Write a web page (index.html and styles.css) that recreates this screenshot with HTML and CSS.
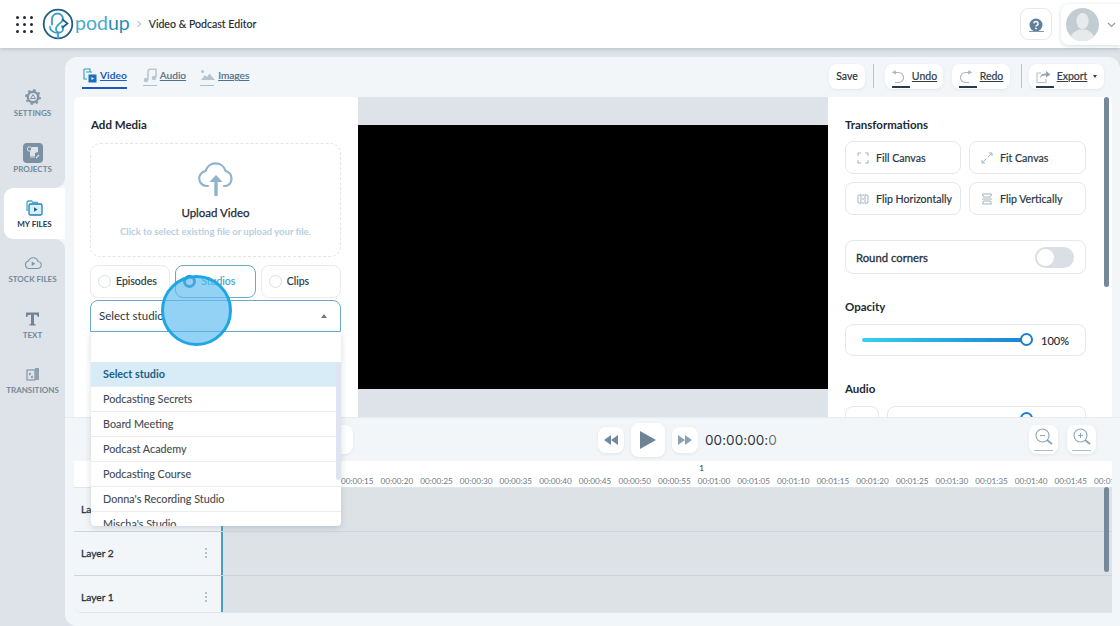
FILE: index.html
```html
<!DOCTYPE html>
<html lang="en">
<head>
<meta charset="utf-8">
<title>Video &amp; Podcast Editor</title>
<link rel="stylesheet" href="styles.css">
</head>
<body>
<div class="app">
  <header class="topbar">
    <div class="grid-icon"><i></i><i></i><i></i><i></i><i></i><i></i><i></i><i></i><i></i></div>
    <svg class="logo-mark" width="32" height="32" viewBox="0 0 32 32" fill="none" stroke-linecap="round">
      <circle cx="16" cy="16" r="14.300" stroke="#1f5f86" stroke-width="1.800"/>
      <path d="M10 16.500V11a5.500 5.500 0 0 1 11 0c0 4-7 5-7 10a3.500 3.500 0 0 0 7 0c0-1-.5-2-1-3" stroke="#3a9fc6" stroke-width="1.800"/>
      <path d="M8 19c0 3 3 6 8 6M16 25v5" stroke="#3a9fc6" stroke-width="1.800"/>
      <path d="M20.500 11.500l5 4-5 4" stroke="#1f5f86" stroke-width="1.700"/>
    </svg>
    <span class="logo-text">pod<b>up</b></span>
    <svg class="crumb-sep" width="6" height="8" viewBox="0 0 6 8" fill="none"><path d="M1.500 1l3 3-3 3" stroke="#9aa5ad"/></svg>
    <span class="crumb">Video &amp; Podcast Editor</span>
    <span class="spacer"></span>
    <button class="help-btn">
      <svg width="16" height="16" viewBox="0 0 16 16"><circle cx="8" cy="7" r="6.500" fill="#5f7f9b"/><path d="M5.900 5.400a2.100 2.100 0 1 1 3 2c-.6.3-.9.6-.9 1.200" fill="none" stroke="#fff" stroke-width="1.500"/><circle cx="8" cy="10.400" r=".9" fill="#fff"/></svg>
      <span class="bar bar-help"></span>
    </button>
    <div class="user-card">
      <svg class="avatar" width="33" height="33" viewBox="0 0 33 33"><circle cx="16.500" cy="16.500" r="16.500" fill="#c2ccd1"/><ellipse cx="16.500" cy="13" rx="6.200" ry="8" fill="#e6eaec"/><path d="M5 29c1-5 6-6 8-7.500h7c2 1.500 7 2.500 8 7.500a16.500 16.500 0 0 1-23 0z" fill="#e6eaec"/></svg>
      <svg width="9" height="6" viewBox="0 0 9 6" fill="none"><path d="M1 1l3.500 3.500L8 1" stroke="#8b9aa6" stroke-width="1.200"/></svg>
    </div>
  </header>

  <div class="body-row">
    <nav class="sidebar">
      <div class="nav-group nav-top">
        <a class="nav-item"><svg width="16" height="16" viewBox="0 0 16 16" fill="none"><circle cx="8" cy="8" r="5.200" stroke="#8396a6" stroke-width="2.400"/><circle cx="8" cy="8" r="7" stroke="#8396a6" stroke-width="1.800" stroke-dasharray="2.500 3"/><path d="M8 5.500l2.300 4H5.700z" stroke="#8396a6"/></svg><span>SETTINGS</span></a>
        <a class="nav-item"><svg width="20" height="20" viewBox="0 0 20 20"><rect width="20" height="20" rx="4" fill="#7b91a3"/><circle cx="6.500" cy="6" r="2.200" fill="none" stroke="#dde3e8"/><path d="M9 4h6v5l-3 1v3H7v-4" fill="#dde3e8"/><path d="M7 14h5M13 15l3-3" stroke="#dde3e8" stroke-width="1.200"/></svg><span>PROJECTS</span></a>
      </div>
      <div class="nav-active-wrap">
        <a class="nav-item active"><svg width="17" height="16" viewBox="0 0 17 16" fill="none"><path d="M1 11V2.500C1 1.700 1.500 1 2.500 1h3l1.500 1.500h5" stroke="#3fa9d0" stroke-width="1.300"/><rect x="3" y="4" width="13" height="11" rx="1.500" fill="#d8eef8" stroke="#1f7fb5" stroke-width="1.300"/><path d="M8 7.200l3.500 2.300L8 11.800z" fill="#1f5f8f"/></svg><span>MY FILES</span></a>
      </div>
      <div class="nav-group nav-bottom">
        <a class="nav-item"><svg width="18" height="13" viewBox="0 0 18 13" fill="none"><path d="M5 12a3.800 3.800 0 0 1-.5-7.500A5 5 0 0 1 14 5a3.500 3.500 0 0 1-.5 7z" stroke="#7f92a2" stroke-width="1.100"/><path d="M7.700 5l3.500 2.200-3.500 2.200z" fill="#7f92a2"/></svg><span>STOCK FILES</span></a>
        <a class="nav-item"><svg width="15" height="15" viewBox="0 0 15 15"><path d="M1 1h13v4.500h-1.300c-.2-1.600-.8-2.300-2.400-2.300H9v8.500c0 .8.300 1 1.600 1V14H4.400v-1.300c1.300 0 1.600-.2 1.600-1V3.200H4.700c-1.600 0-2.200.7-2.400 2.300H1z" fill="#6f8597"/></svg><span>TEXT</span></a>
        <a class="nav-item"><svg width="14" height="14" viewBox="0 0 14 14" fill="none"><rect x="1" y="3" width="8" height="10" stroke="#7f92a2" stroke-width="1.100"/><path d="M9 1h4v12H9z" fill="#8fa0ae"/><path d="M3 6l2 1-2 1M7 9l-2 1 2 1" stroke="#7f92a2"/></svg><span>TRANSITIONS</span></a>
      </div>
    </nav>

    <main class="workspace">
      <div class="toolbar">
        <a class="tab tab-on">
          <svg width="14" height="15" viewBox="0 0 14 15" fill="none"><path d="M1 1h6v3M1 1v10h3M3 4h6" stroke="#2f9cc4" stroke-width="1.100"/><rect x="5.500" y="6.500" width="8" height="8" fill="#1a6fc2"/><path d="M8.500 9l2.500 1.500L8.500 12z" fill="#fff"/></svg>
          <span>Video</span>
        </a>
        <a class="tab">
          <svg width="14" height="15" viewBox="0 0 14 15" fill="none"><path d="M5 12V3.500C5 2 6 1.200 7.500 1.200H13v8" stroke="#b9c7d1" stroke-width="1.600"/><circle cx="3" cy="12" r="2.300" fill="#b9c7d1"/><circle cx="11" cy="10" r="2.300" fill="#b9c7d1"/></svg>
          <span>Audio</span>
          <i class="tab-bar"></i>
        </a>
        <a class="tab tab-images">
          <svg width="15" height="12" viewBox="0 0 15 12"><circle cx="2.500" cy="2.500" r="1.500" fill="#b4c5d0"/><path d="M1 11l4-5 2 2 2.500-3.500L15 11z" fill="#b4c5d0"/></svg>
          <span>Images</span>
          <i class="tab-bar"></i>
        </a>
        <span class="spacer"></span>
        <button class="tool-btn btn-save">Save</button>
        <span class="tool-sep"></span>
        <button class="tool-btn btn-undo">
          <svg width="14" height="13" viewBox="0 0 14 13" fill="none"><path d="M3 2.500h4.500a5 5 0 0 1 0 10H4" stroke="#a9b7c2" stroke-width="1.100"/><path d="M4.500 0L1 2.500 5 4.500z" fill="#a9b7c2"/></svg>
          <u>Undo</u><i class="bar bar-tool"></i>
        </button>
        <button class="tool-btn btn-redo">
          <svg width="14" height="13" viewBox="0 0 14 13" fill="none"><path d="M11 2.500H6.500a5 5 0 0 0 0 10H10" stroke="#a9b7c2" stroke-width="1.100"/><path d="M9.500 0L13 2.500 9 4.500z" fill="#a9b7c2"/></svg>
          <u>Redo</u><i class="bar bar-tool"></i>
        </button>
        <span class="tool-sep sep-wide"></span>
        <button class="tool-btn btn-export">
          <svg width="15" height="13" viewBox="0 0 15 13" fill="none"><path d="M5 3H1v9.500h9V9" stroke="#b5c3cd" stroke-width="1.100"/><path d="M4 8c0-3 2-4.500 6-4.500V1l4.500 3.500L10 7.500V5.500C7 5.500 5 6 4 8z" fill="#8ea5b7"/></svg>
          <u>Export</u><i class="caret"></i><i class="bar bar-tool"></i>
        </button>
      </div>

      <div class="editor">
        <section class="media-panel">
          <h2 class="panel-title">Add Media</h2>
          <div class="dropzone">
            <svg width="38" height="34" viewBox="0 0 38 34" fill="none"><path d="M11 24H9.500a7.500 7.500 0 0 1-1-14.900A10.500 10.500 0 0 1 28.700 9 7.800 7.800 0 0 1 29 24h-2" stroke="#8fb3cc" stroke-width="2.200" stroke-linecap="round"/><path d="M19 33V17" stroke="#8fb3cc" stroke-width="3.400" stroke-linecap="round"/><path d="M12.500 20L19 13l6.500 7z" fill="#8fb3cc"/></svg>
            <strong>Upload Video</strong>
            <span>Click to select existing file or upload your file.</span>
          </div>
          <div class="source-row">
            <label class="source"><i class="radio"></i>Episodes</label>
            <label class="source source-on"><i class="radio radio-on"></i>Studios</label>
            <label class="source"><i class="radio"></i>Clips</label>
          </div>
          <div class="select-wrap">
            <div class="select-box"><span>Select studio</span><i class="select-caret"></i></div>
            <div class="dropdown">
              <div class="search-blank"></div>
              <ul class="options">
                <li class="selected">Select studio</li>
                <li>Podcasting Secrets</li>
                <li>Board Meeting</li>
                <li>Podcast Academy</li>
                <li>Podcasting Course</li>
                <li>Donna's Recording Studio</li>
                <li>Mischa's Studio</li>
              </ul>
              <i class="drop-scroll"></i>
            </div>
          </div>
        </section>

        <section class="preview"><div class="video"></div></section>

        <section class="props-panel">
          <h2 class="panel-title">Transformations</h2>
          <div class="btn-grid">
            <button class="prop-btn"><svg width="12" height="12" viewBox="0 0 12 12" fill="none" stroke="#a3b3bf"><path d="M1 4V1h3M8 1h3v3M11 8v3H8M4 11H1V8"/></svg>Fill Canvas</button>
            <button class="prop-btn"><svg width="12" height="12" viewBox="0 0 12 12" fill="none" stroke="#a3b3bf"><path d="M7 5l4-4M8 1h3v3M5 7l-4 4M1 8v3h3"/></svg>Fit Canvas</button>
            <button class="prop-btn"><svg width="12" height="12" viewBox="0 0 12 12" fill="none" stroke="#a3b3bf"><path d="M4 1.500v9L1 9.500v-7zM8 1.500v9l3-1v-7zM6 1v2M6 5v2M6 9v2"/></svg>Flip Horizontally</button>
            <button class="prop-btn"><svg width="12" height="12" viewBox="0 0 12 12" fill="none" stroke="#a3b3bf"><path d="M1.500 1h9l-1 3h-7zM1.500 11h9l-1-3h-7zM1 6h10"/></svg>Flip Vertically</button>
          </div>
          <div class="prop-box round-box">
            <span>Round corners</span>
            <i class="toggle"><b></b></i>
          </div>
          <h2 class="panel-title title-opacity">Opacity</h2>
          <div class="prop-box opacity-box">
            <div class="slider"><i class="knob"></i></div>
            <span>100%</span>
          </div>
          <h2 class="panel-title title-audio">Audio</h2>
          <div class="audio-row">
            <div class="prop-box audio-mute"></div>
            <div class="prop-box audio-level"><i class="knob"></i></div>
          </div>
        </section>
        <i class="props-scroll"></i>
      </div>

      <div class="controls">
        <button class="ctl-btn ctl-edit">
          <svg width="14" height="16" viewBox="0 0 14 16"><path d="M9 1l3 3-5 5H4V6z" fill="#9fb3c2"/><path d="M2 14h10" stroke="#b5c3cd"/></svg>
        </button>
        <div class="transport">
          <button class="ctl-btn ctl-seek"><svg width="14" height="10" viewBox="0 0 14 10"><path d="M7 0v10L0 5zM14 0v10L7 5z" fill="#71899c"/></svg></button>
          <button class="ctl-btn ctl-play"><svg width="16" height="18" viewBox="0 0 16 18"><path d="M0 0l16 9-16 9z" fill="#6c8496"/></svg></button>
          <button class="ctl-btn ctl-seek"><svg width="14" height="10" viewBox="0 0 14 10"><path d="M0 0v10l7-5zM7 0v10l7-5z" fill="#8ba0b0"/></svg></button>
          <span class="timecode">00:00:00:<em>0</em></span>
        </div>
        <div class="zooms">
          <button class="ctl-btn ctl-zoom"><svg width="18" height="18" viewBox="0 0 18 18" fill="none" stroke="#8fa6b6" stroke-width="1.100"><circle cx="7.500" cy="7.500" r="6.500"/><path d="M5 7.500h5"/><path d="M12 12l5 4" stroke-width="2"/></svg><i class="bar bar-zoom"></i></button>
          <button class="ctl-btn ctl-zoom"><svg width="18" height="18" viewBox="0 0 18 18" fill="none" stroke="#8fa6b6" stroke-width="1.100"><circle cx="7.500" cy="7.500" r="6.500"/><path d="M5 7.500h5M7.500 5v5"/><path d="M12 12l5 4" stroke-width="2"/></svg><i class="bar bar-zoom"></i></button>
        </div>
      </div>

      <div class="ruler">
        <span class="tick">00:00:00</span><span class="tick">00:00:05</span><span class="tick">00:00:10</span><span class="tick">00:00:15</span><span class="tick">00:00:20</span><span class="tick">00:00:25</span><span class="tick">00:00:30</span><span class="tick">00:00:35</span><span class="tick">00:00:40</span><span class="tick">00:00:45</span><span class="tick">00:00:50</span><span class="tick">00:00:55</span><span class="tick tick-min">00:01:00</span><span class="tick">00:01:05</span><span class="tick">00:01:10</span><span class="tick">00:01:15</span><span class="tick">00:01:20</span><span class="tick">00:01:25</span><span class="tick">00:01:30</span><span class="tick">00:01:35</span><span class="tick">00:01:40</span><span class="tick">00:01:45</span><span class="tick">00:01:50</span>
      </div>

      <div class="tracks">
        <div class="track"><div class="layer"><span>Layer 3</span><i class="kebab"></i></div><div class="lane"></div></div>
        <div class="track"><div class="layer"><span>Layer 2</span><i class="kebab"></i></div><div class="lane"></div></div>
        <div class="track"><div class="layer"><span>Layer 1</span><i class="kebab"></i></div><div class="lane"></div></div>
        <i class="tracks-scroll"></i>
      </div>
    </main>
  </div>
  <div class="click-marker"></div>
</div>
</body>
</html>
```
FILE: styles.css
```css
* { box-sizing: border-box; margin: 0; padding: 0; }
html, body { width: 1120px; height: 626px; overflow: hidden; }
body { font-family: "Lato", "Liberation Sans", sans-serif; color: #1d2a33; background: #dde3e8; }
button { font: inherit; color: inherit; border: 0; background: none; }
i, em { font-style: normal; }
ul { list-style: none; }
.spacer { flex: 1; }

.app { position: relative; width: 1120px; height: 626px; display: flex; flex-direction: column; }

/* top bar */
.topbar { position: relative; z-index: 2; height: 48px; flex: none; display: flex; align-items: center; background: #fff; box-shadow: 0 1px 4px rgba(80, 100, 120, .28); padding-left: 16px; }
.grid-icon { display: grid; grid-template-columns: repeat(3, 3px); gap: 4px; margin-right: 9px; }
.grid-icon i { width: 3px; height: 3px; border-radius: 50%; background: #222b33; }
.logo-mark { flex: none; }
.logo-text { font-size: 19.500px; font-weight: 400; color: #49aacb; margin-left: 1px; line-height: 1; position: relative; top: -1px; }
.logo-text b { font-weight: 400; color: #2b8db3; }
.crumb-sep { margin: 0 7px 0 6px; }
.crumb { font-size: 10.600px; color: #20282e; -webkit-text-stroke: .15px #20282e; }
.help-btn { position: relative; width: 32px; height: 32px; border: 1px solid #e3e9ed; border-radius: 8px; display: flex; align-items: flex-start; justify-content: center; padding-top: 9px; margin-right: 9px; }
.bar { position: absolute; display: block; }
.bar-help { left: 8px; bottom: 7px; width: 15px; height: 1px; background: #7e97aa; }
.user-card { width: 59px; height: 41px; margin-top: 4px; align-self: flex-start; background: #fff; border-radius: 8px 0 0 8px; box-shadow: 0 1px 4px rgba(90, 110, 130, .25); display: flex; align-items: center; padding-left: 5px; gap: 8px; }

/* body */
.body-row { flex: 1; display: flex; min-height: 0; }

.sidebar { width: 65px; flex: none; display: flex; flex-direction: column; background: #f3f6f8; }
.nav-group { background: #dde3e8; display: flex; flex-direction: column; }
.nav-top { height: 140px; padding-top: 39px; border-radius: 0 0 10px 0; }
.nav-bottom { flex: 1; padding-top: 14px; border-radius: 0 10px 0 0; }
.nav-active-wrap { background: #dde3e8; padding-left: 4px; height: 51px; flex: none; }
.nav-item { display: flex; flex-direction: column; align-items: center; height: 55.500px; flex: none; font-size: 8px; font-weight: 700; color: #74889a; white-space: nowrap; }
.nav-item svg { height: 20px; flex: none; margin-bottom: 1px; }
.nav-item span { line-height: 10px; }
.nav-item.active { height: 51px; padding-top: 10px; color: #1f3a52; border-radius: 9px 0 0 9px; background: #fff; }

.workspace { flex: 1; min-width: 0; margin-top: 9px; background: #f3f6f8; border-radius: 12px 12px 0 12px; display: flex; flex-direction: column; position: relative; }

.toolbar { height: 40px; flex: none; display: flex; align-items: center; padding: 0 16px 0 18px; }
.tab { position: relative; display: flex; align-items: center; gap: 3px; font-size: 10.200px; color: #50708a; text-decoration: underline; margin-right: 16px; height: 30px; top: -2px; -webkit-text-stroke: .2px #50708a; }
.tab-images { margin-left: -2px; }
.tab-on { color: #1a5fc0; font-weight: 700; -webkit-text-stroke: 0; }
.tab-on::after { content: ""; position: absolute; left: -1px; right: 0; bottom: 1px; height: 2.500px; background: #1a5ab8; }
.tab-bar { position: absolute; left: 0; width: 14px; bottom: 4px; height: 1px; background: #9fc3d8; }
.tool-btn { position: relative; height: 25px; background: #fff; border-radius: 8px; font-size: 10.500px; color: #2f3e48; display: flex; align-items: center; justify-content: center; gap: 7px; box-shadow: 0 1px 3px rgba(120, 140, 160, .12); top: -1px; -webkit-text-stroke: .2px #2f3e48; }
.btn-save { width: 36px; color: #222c33; }
.btn-undo, .btn-redo { width: 58px; margin-right: 9px; }
.btn-export { width: 75px; gap: 6px; }
.tool-sep { width: 1px; height: 24px; background: #b9c6d0; margin: 0 11px 0 8px; top: -1px; position: relative; }
.sep-wide { margin: 0 7px 0 2px; }
.bar-tool { left: 7px; bottom: 1px; width: 18px; height: 1.500px; background: #2a3a48; }
.caret { width: 0; height: 0; border-left: 2.500px solid transparent; border-right: 2.500px solid transparent; border-top: 3px solid #2f3e48; }

.editor { height: 320px; flex: none; display: flex; padding-left: 9px; position: relative; }
.panel-title { font-size: 11.500px; font-weight: 700; color: #1d2a33; line-height: 14px; }

.media-panel { width: 284px; flex: none; background: #fff; padding: 21px 17px 0 16px; position: relative; z-index: 3; border-radius: 6px 0 0 0; }
.media-panel .panel-title { padding-left: 1px; }
.dropzone { height: 114px; margin-top: 11px; border: 1px dashed #dfe6ea; border-radius: 10px; display: flex; flex-direction: column; align-items: center; padding-top: 18px; }
.dropzone strong { font-size: 11.500px; font-weight: 400; color: #1d2a33; margin-top: 10px; line-height: 14px; -webkit-text-stroke: .25px #1d2a33; }
.dropzone span { font-size: 9.500px; font-weight: 700; color: #b7cfe0; margin-top: 6px; line-height: 12px; }
.source-row { display: flex; gap: 5px; margin-top: 8px; }
.source { flex: 1; height: 33px; border: 1px solid #e6ebef; border-radius: 8px; display: flex; align-items: center; gap: 5px; padding: 0 0 1px 7px; font-size: 10.500px; color: #2a3740; -webkit-text-stroke: .15px; }
.source-on { border-color: #6aa9c8; color: #3f9fd0; }
.radio { width: 13px; height: 13px; border-radius: 50%; border: 1px solid #d8dfe4; background: #fff; }
.radio-on { border: 3px solid #1f7fc0; background: #fff; }
.select-wrap { position: relative; margin-top: 2px; }
.select-box { height: 32px; border: 1px solid #6aa9c8; border-radius: 8px 8px 0 0; display: flex; align-items: center; padding: 0 13px 1px 8px; font-size: 11.500px; color: #2a3740; }
.select-box span { flex: 1; }
.select-caret { width: 0; height: 0; border-left: 3px solid transparent; border-right: 3px solid transparent; border-bottom: 4px solid #6b7a85; }
.dropdown { position: absolute; left: 1px; right: 0; top: 32px; height: 194px; background: #fff; overflow: hidden; border-radius: 0 0 4px 4px; box-shadow: 0 2px 6px rgba(90, 110, 130, .25); }
.search-blank { height: 30px; }
.options li { height: 25px; line-height: 24px; padding-left: 12px; font-size: 10.800px; color: #3f4a52; border-bottom: 1px solid #e8edf0; -webkit-text-stroke: .1px; }
.options li.selected { background: #d7ecf7; color: #1f5f86; font-weight: 700; -webkit-text-stroke: 0; }
.drop-scroll { position: absolute; right: 0; top: 30px; width: 5px; height: 118px; background: #dfe4ee; border-radius: 3px; }

.preview { width: 470px; flex: none; background: #dde3e8; padding-top: 28px; }
.video { height: 264px; background: #000; }

.props-panel { width: 284px; flex: none; background: #fff; padding: 21px 0 0 17px; overflow: hidden; }
.btn-grid { display: grid; grid-template-columns: 116px 117px; grid-auto-rows: 33px; gap: 8px; margin-top: 9px; }
.prop-btn { border: 1px solid #e3e8ec; border-radius: 8px; font-size: 10.600px; color: #2a3740; display: flex; align-items: center; gap: 7px; padding-left: 11px; -webkit-text-stroke: .2px #2a3740; }
.prop-box { border: 1px solid #e3e8ec; border-radius: 8px; display: flex; align-items: center; width: 241px; }
.round-box { height: 34px; margin-top: 25px; padding: 0 11px 0 10px; justify-content: space-between; font-size: 11.300px; color: #26333c; -webkit-text-stroke: .3px #26333c; }
.toggle { width: 39px; height: 21px; border-radius: 11px; background: #d9dfe4; padding: 2px; }
.toggle b { display: block; width: 17px; height: 17px; border-radius: 50%; background: #fff; }
.title-opacity { margin-top: 26px; }
.opacity-box { height: 32px; margin-top: 10px; padding-left: 16px; gap: 9px; font-size: 11px; -webkit-text-stroke: .15px; }
.slider { position: relative; width: 170px; height: 3.500px; border-radius: 2px; background: linear-gradient(90deg, #36d0ee, #1a7fd8); }
.knob { position: absolute; right: -1px; top: -5px; width: 13px; height: 13px; border-radius: 50%; border: 2.500px solid #1a7fd0; background: #fff; }
.title-audio { margin-top: 26px; }
.audio-row { display: flex; gap: 8px; margin-top: 10px; }
.audio-mute { width: 34px; height: 32px; }
.audio-level { width: 199px; height: 32px; position: relative; }
.audio-level .knob { right: 52px; top: 5px; }
.props-scroll { position: absolute; top: 0; width: 5px; height: 190px; right: 11px; background: #75899a; border-radius: 3px; }

.controls { height: 44px; flex: none; position: relative; z-index: 2; display: flex; align-items: center; padding-left: 251px; background: #f3f6f8; border-top: 1px solid #e7ecef; }
.ctl-btn { background: #fff; border-radius: 8px; display: flex; align-items: center; justify-content: center; box-shadow: 0 1px 3px rgba(120, 140, 160, .15); position: relative; }
.ctl-edit { width: 37px; height: 29px; }
.transport { display: flex; align-items: center; margin-left: 245px; gap: 7px; }
.ctl-seek { width: 26px; height: 26px; }
.ctl-play { width: 34px; height: 34px; }
.timecode { font-size: 13.500px; font-family: "Inter", "Lato", sans-serif; color: #2c363d; letter-spacing: .05px; }
.timecode em { color: #6a7781; }
.zooms { display: flex; gap: 9px; margin-left: auto; margin-right: 24px; }
.ctl-zoom { width: 29px; height: 29px; padding-bottom: 5px; }
.bar-zoom { left: 5px; right: 5px; bottom: 3px; height: 1.500px; background: #aebfcb; }

.ruler { height: 26px; flex: none; background: #fff; margin-left: 9px; margin-right: 8px; display: flex; padding-left: 144.500px; overflow: hidden; position: relative; }
.tick { position: relative; flex: none; width: 39.650px; text-align: center; font-size: 8.200px; line-height: 10px; padding-top: 15px; color: #6d7a84; white-space: nowrap; }
.tick-min::before { content: "1"; position: absolute; left: 5px; top: 2px; color: #333; }

.tracks { height: 126px; flex: none; position: relative; margin-left: 9px; margin-right: 8px; overflow: hidden; border-radius: 0 0 0 8px; border-bottom: 1px solid #dfe5e9; }
.track { height: 44px; flex: none; display: flex; border-top: 1px solid #cfd6db; }
.track:first-child { border-top: 1px solid #dfe5e9; }
.layer { width: 149px; flex: none; display: flex; align-items: center; justify-content: space-between; padding: 0 14px 2px 7px; font-size: 10.200px; color: #26333c; background: #f3f6f8; border-right: 2px solid #4d9cc4; -webkit-text-stroke: .3px #26333c; }
.lane { flex: 1; background: #dde2e7; }
.kebab { width: 2px; height: 2px; border-radius: 50%; background: #9fb0bc; box-shadow: 0 4px 0 #9fb0bc, 0 -4px 0 #9fb0bc; }
.tracks-scroll { position: absolute; top: 0; right: 3px; width: 5px; height: 85px; background: #75899a; border-radius: 3px; }

.click-marker { position: absolute; z-index: 5; left: 161px; top: 275px; width: 71px; height: 71px; border-radius: 50%; border: 3.500px solid #1ea7e2; background: rgba(90, 186, 240, .65); }
```
